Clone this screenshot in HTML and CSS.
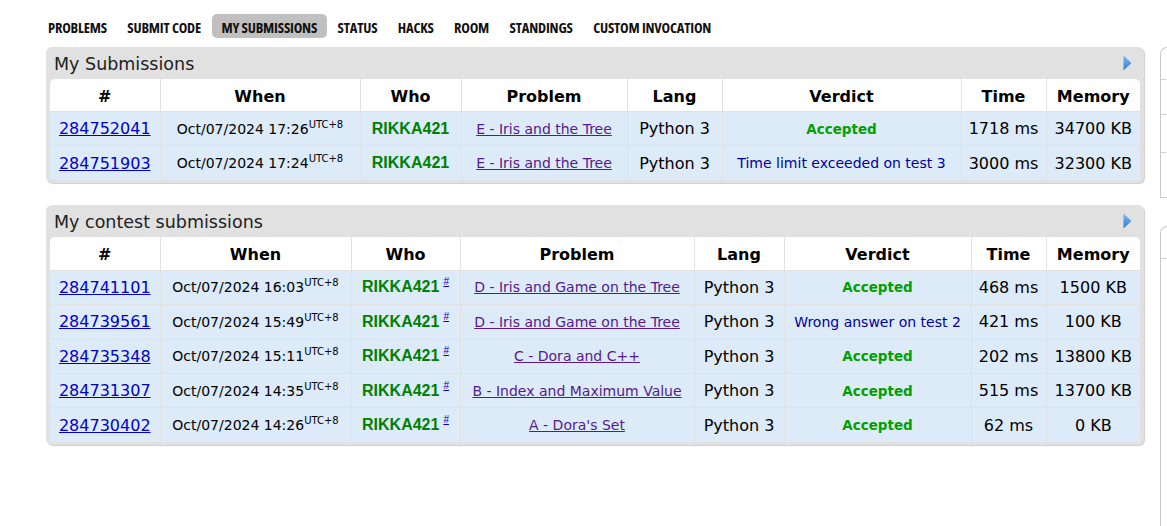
FILE: index.html
```html
<!DOCTYPE html>
<html>
<head>
<meta charset="utf-8">
<link rel="stylesheet" href="styles.css">
</head>
<body>
<nav class="menu">
  <a class="menu-item">PROBLEMS</a>
  <a class="menu-item">SUBMIT CODE</a>
  <a class="menu-item selected">MY SUBMISSIONS</a>
  <a class="menu-item">STATUS</a>
  <a class="menu-item">HACKS</a>
  <a class="menu-item">ROOM</a>
  <a class="menu-item">STANDINGS</a>
  <a class="menu-item">CUSTOM INVOCATION</a>
</nav>
<div class="layout">
  <main class="content">
    <section class="box box-first">
      <div class="caption">
        <span>My Submissions</span>
        <svg class="arrow" width="9" height="16" viewBox="0 0 9 16"><defs><linearGradient id="g1" x1="0" y1="0" x2="0" y2="1"><stop offset="0" stop-color="#7fb8ee"/><stop offset="1" stop-color="#2a7fd4"/></linearGradient></defs><polygon points="0.5,0.5 8.5,8 0.5,15.5" fill="url(#g1)"/></svg>
      </div>
      <table class="status t1">
        <colgroup>
          <col class="w-id"><col class="w-when1"><col class="w-who1"><col class="w-prob1"><col class="w-lang1"><col class="w-verd1"><col class="w-time1"><col class="w-mem">
        </colgroup>
        <tr class="head"><th class="first">#</th><th>When</th><th>Who</th><th>Problem</th><th>Lang</th><th>Verdict</th><th>Time</th><th class="last">Memory</th></tr>
        <tr><td><a class="id">284752041</a></td><td class="when">Oct/07/2024 17:26<sup>UTC+8</sup></td><td><span class="who">RIKKA421</span></td><td><a class="prob">E - Iris and the Tree</a></td><td class="big">Python 3</td><td><span class="ac">Accepted</span></td><td class="big">1718 ms</td><td class="big">34700 KB</td></tr>
        <tr><td><a class="id">284751903</a></td><td class="when">Oct/07/2024 17:24<sup>UTC+8</sup></td><td><span class="who">RIKKA421</span></td><td><a class="prob">E - Iris and the Tree</a></td><td class="big">Python 3</td><td><span class="rej">Time limit exceeded on test 3</span></td><td class="big">3000 ms</td><td class="big">32300 KB</td></tr>
      </table>
    </section>

    <section class="box box-second">
      <div class="caption">
        <span>My contest submissions</span>
        <svg class="arrow" width="9" height="16" viewBox="0 0 9 16"><defs><linearGradient id="g2" x1="0" y1="0" x2="0" y2="1"><stop offset="0" stop-color="#7fb8ee"/><stop offset="1" stop-color="#2a7fd4"/></linearGradient></defs><polygon points="0.5,0.5 8.5,8 0.5,15.5" fill="url(#g2)"/></svg>
      </div>
      <table class="status t2">
        <colgroup>
          <col class="w-id"><col class="w-when2"><col class="w-who2"><col class="w-prob2"><col class="w-lang2"><col class="w-verd2"><col class="w-time2"><col class="w-mem">
        </colgroup>
        <tr class="head"><th class="first">#</th><th>When</th><th>Who</th><th>Problem</th><th>Lang</th><th>Verdict</th><th>Time</th><th class="last">Memory</th></tr>
        <tr><td><a class="id">284741101</a></td><td class="when">Oct/07/2024 16:03<sup>UTC+8</sup></td><td><span class="who">RIKKA421</span><sup class="hash">#</sup></td><td><a class="prob">D - Iris and Game on the Tree</a></td><td class="big">Python 3</td><td><span class="ac">Accepted</span></td><td class="big">468 ms</td><td class="big">1500 KB</td></tr>
        <tr><td><a class="id">284739561</a></td><td class="when">Oct/07/2024 15:49<sup>UTC+8</sup></td><td><span class="who">RIKKA421</span><sup class="hash">#</sup></td><td><a class="prob">D - Iris and Game on the Tree</a></td><td class="big">Python 3</td><td><span class="rej">Wrong answer on test 2</span></td><td class="big">421 ms</td><td class="big">100 KB</td></tr>
        <tr><td><a class="id">284735348</a></td><td class="when">Oct/07/2024 15:11<sup>UTC+8</sup></td><td><span class="who">RIKKA421</span><sup class="hash">#</sup></td><td><a class="prob">C - Dora and C++</a></td><td class="big">Python 3</td><td><span class="ac">Accepted</span></td><td class="big">202 ms</td><td class="big">13800 KB</td></tr>
        <tr><td><a class="id">284731307</a></td><td class="when">Oct/07/2024 14:35<sup>UTC+8</sup></td><td><span class="who">RIKKA421</span><sup class="hash">#</sup></td><td><a class="prob">B - Index and Maximum Value</a></td><td class="big">Python 3</td><td><span class="ac">Accepted</span></td><td class="big">515 ms</td><td class="big">13700 KB</td></tr>
        <tr><td><a class="id">284730402</a></td><td class="when">Oct/07/2024 14:26<sup>UTC+8</sup></td><td><span class="who">RIKKA421</span><sup class="hash">#</sup></td><td><a class="prob">A - Dora's Set</a></td><td class="big">Python 3</td><td><span class="ac">Accepted</span></td><td class="big">62 ms</td><td class="big">0 KB</td></tr>
      </table>
    </section>
  </main>
  <aside class="sidebar">
    <div class="side-box side-first">
      <div class="side-row h32"></div>
      <div class="side-row h35"></div>
      <div class="side-row h38"></div>
      <div class="side-row h44"></div>
    </div>
    <div class="side-box side-second">
      <div class="side-row h32"></div>
      <div class="side-row fill"></div>
    </div>
  </aside>
</div>
</body>
</html>
```

FILE: styles.css
```css
html, body {
  margin: 0;
  padding: 0;
  background: #fff;
  height: 100%;
  overflow: hidden;
}
body {
  font-family: "DejaVu Sans", Verdana, sans-serif;
  color: #000;
}
.menu {
  display: flex;
  padding: 14px 0 0 38px;
  height: 24px;
}
.menu-item {
  display: block;
  height: 24px;
  line-height: 27px;
  padding: 0 10px;
  margin-right: 0.5px;
  font-family: "Open Sans", "Roboto", sans-serif;
  font-stretch: 75%;
  font-weight: 700;
  font-size: 14.5px;
  letter-spacing: -0.2px;
  color: #111;
  border-radius: 5px;
}
.menu-item.selected {
  background: #c0c0c0;
}
.layout {
  display: flex;
  padding-top: 9px;
  height: calc(100% - 47px);
}
.content {
  margin-left: 46px;
  width: 1098px;
  flex: none;
}
.box {
  background: #e1e1e1;
  border-radius: 6px;
  padding: 0 4px 3px 4px;
  box-shadow: 1px 1px 1px #cfcfcf;
}
.box-second {
  margin-top: 22px;
}
.caption {
  height: 32px;
  display: flex;
  align-items: center;
  justify-content: space-between;
  padding: 0 8px 0 4px;
  font-size: 17.5px;
  color: #222;
}
.caption span {
  position: relative;
  top: 1px;
}
.arrow {
  display: block;
}
.status {
  width: 1090px;
  table-layout: fixed;
  border-collapse: collapse;
  border-spacing: 0;
}
.w-id { width: 110px; }
.w-when1 { width: 200px; }
.w-who1 { width: 101px; }
.w-prob1 { width: 166px; }
.w-lang1 { width: 95px; }
.w-verd1 { width: 239px; }
.w-time1 { width: 85px; }
.w-mem { width: 94px; }
.w-when2 { width: 191px; }
.w-who2 { width: 109px; }
.w-prob2 { width: 234px; }
.w-lang2 { width: 90px; }
.w-verd2 { width: 187px; }
.w-time2 { width: 75px; }

.status th {
  background: #fff;
  height: 30px;
  padding: 2px 0 0 0;
  font-size: 16px;
  font-weight: bold;
  text-align: center;
  border-left: 1px solid #e1e1e1;
  border-bottom: 1px solid #e1e1e1;
}
.t2 th {
  height: 31px;
}
.status th.first {
  border-left: none;
  border-top-left-radius: 5px;
}
.status th.last {
  border-top-right-radius: 5px;
}
.status td {
  background: #ddebf9;
  height: 33.4px;
  padding: 0;
  text-align: center;
  white-space: nowrap;
  border-left: 1px solid #e1e1e1;
  border-top: 1px solid #e1e1e1;
  font-size: 14px;
}
.status td:first-child {
  border-left: none;
}
.status td.big {
  font-size: 16px;
}
.id {
  color: #0000cc;
  text-decoration: underline;
  font-size: 16px;
}
.when sup {
  font-size: 10px;
  vertical-align: 6px;
  line-height: 0;
}
.who {
  font-family: "Liberation Sans", Arial, sans-serif;
  font-weight: bold;
  font-size: 16px;
  color: #008000;
}
.hash {
  font-family: "Liberation Sans", Arial, sans-serif;
  font-size: 10px;
  color: #0000cc;
  text-decoration: underline;
  vertical-align: 7px;
  line-height: 0;
  margin-left: 4px;
}
.prob {
  color: #551a8b;
  text-decoration: underline;
  font-size: 14px;
}
.ac {
  color: #00a000;
  font-weight: bold;
  font-size: 13.5px;
}
.rej {
  color: #0000a0;
  font-size: 14px;
}
.sidebar {
  margin-left: 16px;
  flex: 1;
  display: flex;
  flex-direction: column;
}
.side-box {
  border: 1px solid #c8c8c8;
  border-right: none;
  border-top-left-radius: 8px;
}
.side-first {
  height: 149px;
}
.side-second {
  margin-top: 28px;
  flex: 1;
  border-bottom: none;
}
.side-row {
  border-bottom: 1px solid #d4d4d4;
}
.side-row:last-child {
  border-bottom: none;
}
.h32 { height: 31px; }
.h35 { height: 34px; }
.h38 { height: 37px; }
.h44 { height: 43px; }
.side-row.fill { flex: 1; }
```
